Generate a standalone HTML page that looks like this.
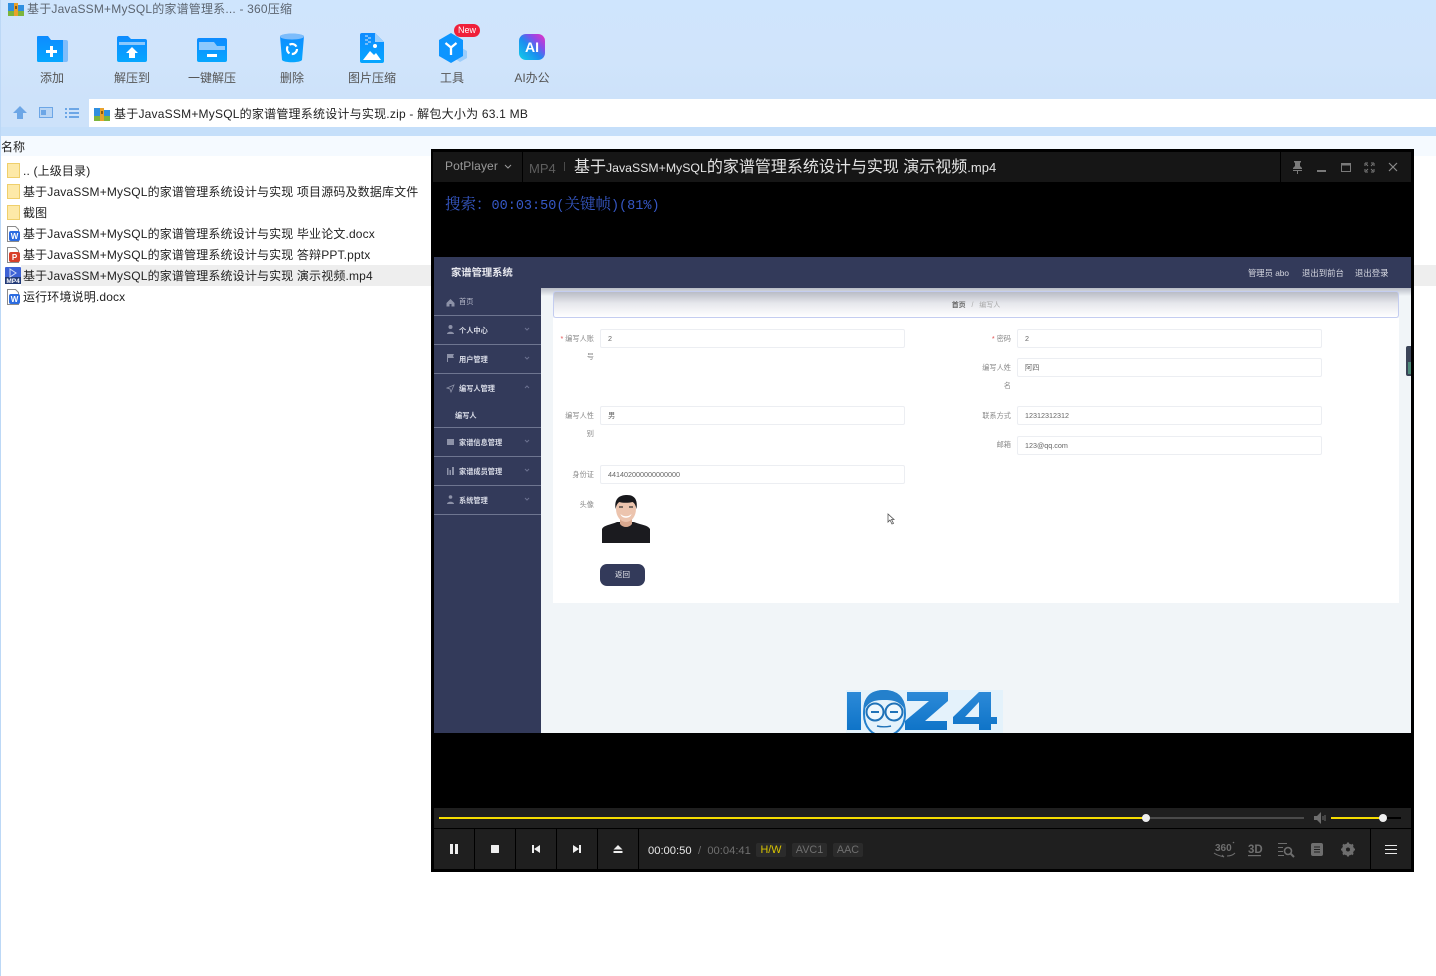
<!DOCTYPE html>
<html lang="zh"><head><meta charset="utf-8"><title>360压缩</title>
<style>
*{box-sizing:border-box}
html,body{margin:0;padding:0;width:1436px;height:976px;overflow:hidden;background:#fff}
body{position:relative;font-family:"Liberation Sans","Noto Sans CJK SC",sans-serif;color:#222}
.a{position:absolute;white-space:nowrap}
.tb{position:absolute;top:70px;width:80px;text-align:center;font-size:12px;color:#555;line-height:16px}
.f{position:absolute;left:23px;font-size:12px;line-height:16px;letter-spacing:.15px;color:#222;white-space:nowrap}
.ico{position:absolute}
.side{position:absolute;left:459px;font-size:7.2px;color:#d8dbe6;font-weight:bold;line-height:10px;white-space:nowrap}
.ln{position:absolute;left:434px;width:107px;height:1px;background:#6e7590}
.chev{position:absolute;left:524px;width:6px;height:6px}
.inp{position:absolute;height:19px;width:305px;background:#fff;border:1px solid #eceef2;border-radius:2px;font-size:7.2px;color:#666;line-height:17px;padding-left:7px}
.lb{position:absolute;font-size:7.2px;color:#8a8a8a;line-height:9px;text-align:right;white-space:nowrap}
.bsep{position:absolute;top:829px;width:1px;height:40px;background:#000}
.tag{position:absolute;top:843px;height:14px;border-radius:2px;background:#2b2b2b;font-size:10.8px;line-height:15px;text-align:center;color:#6f6f6f}
.m{font-family:"Liberation Mono",monospace;font-size:13.5px}
</style></head><body>

<!-- chrome background -->
<div class="a" style="left:0;top:0;width:1436px;height:99px;background:linear-gradient(#cfe5fd,#d0e4fb 60%,#cde2fa)"></div>
<div class="a" style="left:0;top:99px;width:89px;height:28px;background:#cde2fa"></div>
<div class="a" style="left:89px;top:99px;width:1347px;height:28px;background:#fff"></div>
<div class="a" style="left:0;top:127px;width:1436px;height:9px;background:#c5dffa"></div>
<div class="a" style="left:0;top:136px;width:1436px;height:20px;background:#f5faff"></div>
<div class="a" style="left:0;top:0;width:1px;height:976px;background:#bcd8f6"></div>

<!-- title -->
<svg class="ico" style="left:8px;top:1px" width="16" height="16" viewBox="0 0 16 16"><path d="M0 2h6l2 2h8v11H0z" fill="#2f8fe0"/><rect y="10" width="16" height="5" fill="#7cb53c"/><rect x="6" y="2" width="4" height="13" fill="#e9a22c"/><rect x="7" y="5" width="2" height="3" fill="#8a5a12"/></svg>
<div class="a" style="left:27px;top:1px;font-size:12px;line-height:16px;color:#5c6570;letter-spacing:.19px">基于JavaSSM+MySQL的家谱管理系... - 360压缩</div>

<!-- toolbar icons -->
<svg class="ico" style="left:36px;top:35px" width="33" height="28" viewBox="0 0 33 28"><defs><linearGradient id="g" x1="0" y1="0" x2="0" y2="1"><stop offset="0" stop-color="#0e8bff"/><stop offset="1" stop-color="#06a6ff"/></linearGradient></defs><path d="M27 5h3a2 2 0 0 1 2 2v18a2 2 0 0 1-2 2h-3z" fill="#7fbdfb"/><path d="M2 1h10l3 4h12v22H2a2 2 0 0 1-1-1V2a1 1 0 0 1 1-1z" fill="url(#g)"/><path d="M14 11h3v4h4v3h-4v4h-3v-4h-4v-3h4z" fill="#fff"/></svg>
<svg class="ico" style="left:117px;top:35px" width="30" height="28" viewBox="0 0 30 28"><path d="M2 1h9l3 3h14a2 2 0 0 1 2 2v19a2 2 0 0 1-2 2H2a2 2 0 0 1-2-2V3a2 2 0 0 1 2-2z" fill="url(#g)"/><rect x="2" y="7" width="26" height="3" fill="#8cc8fd"/><path d="M15 12l6 6h-3v5h-6v-5H9z" fill="#fff"/></svg>
<svg class="ico" style="left:197px;top:38px" width="30" height="25" viewBox="0 0 30 25"><rect width="30" height="24" rx="2" fill="url(#g)"/><path d="M2 4h15l3 4h8v4H2z" fill="#8cc8fd"/><rect x="10" y="16" width="10" height="3" fill="#fff"/></svg>
<svg class="ico" style="left:280px;top:33px" width="24" height="30" viewBox="0 0 24 30"><path d="M0 3c4-3 20-3 24 0l-2 24c-2 3-18 3-20 0z" fill="url(#g)"/><ellipse cx="12" cy="3.5" rx="12" ry="3" fill="#7cbcfb"/><circle cx="12" cy="16" r="5" fill="none" stroke="#fff" stroke-width="2.200" stroke-dasharray="8 2.400"/></svg>
<svg class="ico" style="left:360px;top:33px" width="24" height="30" viewBox="0 0 24 30"><path d="M2 0h13l9 9v19a2 2 0 0 1-2 2H2a2 2 0 0 1-2-2V2a2 2 0 0 1 2-2z" fill="url(#g)"/><path d="M15 0l9 9h-9z" fill="#9ccffd"/><path d="M3 27l7-9 4 4 2-2 5 7z" fill="#fff"/><circle cx="15" cy="13" r="2" fill="#fff"/><path d="M5 2h3v2H5zm3 2h3v2H8zM5 6h3v2H5zm3 2h3v2H8zM5 10h3v2H5z" fill="#75bcfb"/></svg>
<svg class="ico" style="left:438px;top:33px" width="30" height="30" viewBox="0 0 30 30"><path d="M22 14l7 4v7l-7 4-6-4v-7z" fill="#9ccdfb"/><path d="M13 0l12 7v16l-12 7-12-7V7z" fill="#0d95ff"/><path d="M7.500 10l5.500 4.500L18.500 10M13 14.500V22" fill="none" stroke="#fff" stroke-width="2.300"/></svg>
<div class="a" style="left:454px;top:24px;width:26px;height:13px;background:#f0203a;border-radius:7px;color:#fff;font-size:9px;line-height:13px;text-align:center">New</div>
<div class="a" style="left:519px;top:34px;width:26px;height:26px;border-radius:7px;background:linear-gradient(45deg,#11c9e8 5%,#1c8cf0 45%,#8a4bea 70%,#ee2fc0);color:#fff;font-weight:bold;font-size:14px;line-height:26px;text-align:center">AI</div>

<div class="tb" style="left:12px">添加</div>
<div class="tb" style="left:92px">解压到</div>
<div class="tb" style="left:172px">一键解压</div>
<div class="tb" style="left:252px">删除</div>
<div class="tb" style="left:332px">图片压缩</div>
<div class="tb" style="left:412px">工具</div>
<div class="tb" style="left:492px">AI办公</div>

<!-- nav -->
<svg class="ico" style="left:12px;top:105px" width="68" height="16" viewBox="0 0 68 16"><path d="M8 1l7 7h-4v6H5V8H1z" fill="#6ca6e6"/><rect x="27.500" y="2.500" width="13" height="10" fill="#b9d5f4" stroke="#6ca6e6"/><rect x="29" y="5" width="5" height="5" fill="#6ca6e6"/><path d="M53 3h2v2h-2zm4 0h10v2H57zM53 7h2v2h-2zm4 0h10v2H57zM53 11h2v2h-2zm4 0h10v2H57z" fill="#6ca6e6"/></svg>
<svg class="ico" style="left:94px;top:106px" width="16" height="16" viewBox="0 0 16 16"><path d="M0 2h6l2 2h8v11H0z" fill="#2f8fe0"/><rect y="10" width="16" height="5" fill="#7cb53c"/><rect x="6" y="2" width="4" height="13" fill="#e9a22c"/><rect x="7" y="5" width="2" height="3" fill="#8a5a12"/></svg>
<div class="a" style="left:114px;top:106px;font-size:12px;line-height:16px;letter-spacing:.22px;color:#222">基于JavaSSM+MySQL的家谱管理系统设计与实现.zip - 解包大小为 63.1 MB</div>

<!-- list -->
<div class="a" style="left:1px;top:140px;font-size:12px;line-height:15px;color:#222">名称</div>
<div class="a" style="left:21px;top:265px;width:1415px;height:21px;background:#eeeeee"></div>

<div class="ico" style="left:7px;top:163px;width:13px;height:15px;background:#fde9a8;border:1px solid #efcf6b"></div>
<div class="ico" style="left:7px;top:184px;width:13px;height:15px;background:#fde9a8;border:1px solid #efcf6b"></div>
<div class="ico" style="left:7px;top:205px;width:13px;height:15px;background:#fde9a8;border:1px solid #efcf6b"></div>
<svg class="ico" style="left:6px;top:226px" width="15" height="16" viewBox="0 0 15 16"><path d="M1.500.5h8l3 3v12h-11z" fill="#fff" stroke="#8b8b8b"/><rect x="3" y="5" width="11" height="10" rx="2" fill="#2c6ce0"/><text x="8.500" y="13" font-size="8" font-weight="bold" fill="#fff" text-anchor="middle" font-family="Liberation Sans">W</text></svg>
<svg class="ico" style="left:6px;top:247px" width="15" height="16" viewBox="0 0 15 16"><path d="M1.500.5h8l3 3v12h-11z" fill="#fff" stroke="#8b8b8b"/><rect x="3" y="5" width="11" height="10" rx="2" fill="#d8402a"/><text x="8.500" y="13" font-size="8" font-weight="bold" fill="#fff" text-anchor="middle" font-family="Liberation Sans">P</text></svg>
<svg class="ico" style="left:5px;top:267px" width="16" height="17" viewBox="0 0 16 17"><rect width="16" height="17" rx="1" fill="#3d62d6"/><rect y="10" width="16" height="7" fill="#223a77"/><path d="M5 2l6 4-6 4z" fill="none" stroke="#cfd9f7"/><text x="8" y="16" font-size="6.500" font-weight="bold" fill="#fff" text-anchor="middle" font-family="Liberation Sans">MP4</text></svg>
<svg class="ico" style="left:6px;top:289px" width="15" height="16" viewBox="0 0 15 16"><path d="M1.500.5h8l3 3v12h-11z" fill="#fff" stroke="#8b8b8b"/><rect x="3" y="5" width="11" height="10" rx="2" fill="#2c6ce0"/><text x="8.500" y="13" font-size="8" font-weight="bold" fill="#fff" text-anchor="middle" font-family="Liberation Sans">W</text></svg>

<div class="f" style="top:163px">.. (上级目录)</div>
<div class="f" style="top:184px">基于JavaSSM+MySQL的家谱管理系统设计与实现 项目源码及数据库文件</div>
<div class="f" style="top:205px">截图</div>
<div class="f" style="top:226px">基于JavaSSM+MySQL的家谱管理系统设计与实现 毕业论文.docx</div>
<div class="f" style="top:247px">基于JavaSSM+MySQL的家谱管理系统设计与实现 答辩PPT.pptx</div>
<div class="f" style="top:268px">基于JavaSSM+MySQL的家谱管理系统设计与实现 演示视频.mp4</div>
<div class="f" style="top:289px">运行环境说明.docx</div>

<!-- player -->
<div class="a" style="left:431px;top:149px;width:983px;height:723px;background:#000"></div>
<div class="a" style="left:433px;top:152px;width:978px;height:30px;background:#161616"></div>
<div class="a" style="left:522px;top:152px;width:1px;height:30px;background:#000"></div>
<div class="a" style="left:1280px;top:152px;width:1px;height:30px;background:#000"></div>
<div class="a" style="left:445px;top:158px;font-size:12px;line-height:16px;letter-spacing:.1px;color:#9a9a9a">PotPlayer</div>
<svg class="ico" style="left:504px;top:164px" width="8" height="6"><path d="M1 1l3 3 3-3" fill="none" stroke="#9a9a9a"/></svg>
<div class="a" style="left:529px;top:161px;font-size:13px;line-height:16px;color:#5e5e5e">MP4</div>
<div class="a" style="left:564px;top:162px;width:1px;height:9px;background:#4a4a4a"></div>
<div class="a" style="left:574px;top:158px;font-size:16px;line-height:20px;color:#e4e4e4">基于<span style="font-size:12.300px">JavaSSM+MySQL</span>的家谱管理系统设计与实现 演示视频<span style="font-size:13px">.mp4</span></div>
<svg class="ico" style="left:1290px;top:160px" width="112" height="15" viewBox="0 0 112 15" fill="#7a7a7a"><path d="M4 1h7v1.500H10V6l2 2v1H3V8l2-2V2.500H4zM3 10h9v1H8v3H7v-3H3z"/><rect x="27" y="10" width="9" height="2"/><path d="M51.500 3.500h9v8h-9zM51 4.500h10" fill="none" stroke="#7a7a7a" stroke-width="1"/><rect x="51" y="3" width="10" height="2.500"/><path d="M75 3h3M75 3v3M84 3h-3M84 3v3M75 12h3M75 12V9M84 12h-3M84 12V9M76 4l2 2M83 4l-2 2M76 11l2-2M83 11l-2-2" fill="none" stroke="#7a7a7a"/><path d="M99 3l8 8M107 3l-8 8" fill="none" stroke="#8a8a8a" stroke-width="1.200"/></svg>

<div class="a" style="left:445px;top:193px;font-family:'Noto Serif CJK SC',serif;font-size:15.500px;line-height:20px;color:#3658c6">搜索：<span class="m">00:03:50(</span>关键帧<span class="m">)(81%)</span></div>

<!-- video -->
<div class="a" style="left:434px;top:257px;width:977px;height:476px;background:#f1f5f8"></div>
<div class="a" style="left:434px;top:257px;width:977px;height:31px;background:#333a5a"></div>
<div class="a" style="left:434px;top:288px;width:107px;height:445px;background:#333a5a"></div>
<div class="a" style="left:541px;top:288px;width:870px;height:8px;background:linear-gradient(#b9bcc6,#f1f5f8)"></div>
<div class="a" style="left:451px;top:267px;font-size:10.300px;font-weight:bold;line-height:13px;color:#e8e9ef">家谱管理系统</div>
<div class="a" style="left:1248px;top:268px;font-size:8.300px;line-height:10px;color:#d5d7e0">管理员 abo</div>
<div class="a" style="left:1302px;top:268px;font-size:8.400px;line-height:10px;color:#d5d7e0">退出到前台</div>
<div class="a" style="left:1355px;top:268px;font-size:8.400px;line-height:10px;color:#d5d7e0">退出登录</div>

<svg class="ico" style="left:446px;top:298px" width="9" height="210" viewBox="0 0 9 210" fill="#8d92a8"><path d="M4.500 1L8.500 5v3.500h-3V6h-2v2.500h-3V5z"/><circle cx="4.500" cy="29" r="2"/><path d="M1 36c0-3 7-3 7 0z"/><path d="M1 56h1v8H1zM2 56h6l-1 2 1 2H2z"/><path d="M1 90l7-3-3 7-1-3z" fill="none" stroke="#8d92a8" stroke-width=".8"/><rect x="1" y="141" width="7" height="6"/><path d="M1 170h1.500v7H1zM3.500 172H5v5H3.500zM6 169h2v8H6z"/><circle cx="4.500" cy="199" r="1.800"/><path d="M1 206c0-3 7-3 7 0z"/></svg>
<div class="side" style="top:297px;font-weight:normal;color:#b7bacb">首页</div>
<div class="side" style="top:326px">个人中心</div>
<div class="side" style="top:355px">用户管理</div>
<div class="side" style="top:384px">编写人管理</div>
<div class="side" style="left:455px;top:411px">编写人</div>
<div class="side" style="top:438px">家谱信息管理</div>
<div class="side" style="top:467px">家谱成员管理</div>
<div class="side" style="top:496px">系统管理</div>
<div class="ln" style="top:315px"></div><div class="ln" style="top:344px"></div><div class="ln" style="top:373px"></div><div class="ln" style="top:427px"></div><div class="ln" style="top:456px"></div><div class="ln" style="top:485px"></div><div class="ln" style="top:514px"></div>
<svg class="chev" style="top:326px"><path d="M1 2l2 2 2-2" fill="none" stroke="#6b7190"/></svg>
<svg class="chev" style="top:355px"><path d="M1 2l2 2 2-2" fill="none" stroke="#6b7190"/></svg>
<svg class="chev" style="top:384px"><path d="M1 4l2-2 2 2" fill="none" stroke="#6b7190"/></svg>
<svg class="chev" style="top:438px"><path d="M1 2l2 2 2-2" fill="none" stroke="#6b7190"/></svg>
<svg class="chev" style="top:467px"><path d="M1 2l2 2 2-2" fill="none" stroke="#6b7190"/></svg>
<svg class="chev" style="top:496px"><path d="M1 2l2 2 2-2" fill="none" stroke="#6b7190"/></svg>

<div class="a" style="left:553px;top:318px;width:846px;height:285px;background:#fff"></div>
<div class="a" style="left:553px;top:291px;width:846px;height:27px;border:1px solid #c4cdf0;border-radius:3px;background:linear-gradient(#b9bcc6,#e6e7ec 45%,#fff);text-align:center;font-size:7px;line-height:28px;color:#aaa"><b style="color:#666">首页</b> &nbsp;&nbsp;/&nbsp;&nbsp; 编写人</div>

<div class="lb" style="left:555px;top:334px;width:39px"><span style="color:#e05050">*</span> 编写人账</div>
<div class="lb" style="left:555px;top:352px;width:39px">号</div>
<div class="lb" style="left:555px;top:411px;width:39px">编写人性</div>
<div class="lb" style="left:555px;top:429px;width:39px">别</div>
<div class="lb" style="left:555px;top:470px;width:39px">身份证</div>
<div class="lb" style="left:555px;top:500px;width:39px">头像</div>
<div class="inp" style="left:600px;top:329px">2</div>
<div class="inp" style="left:600px;top:406px">男</div>
<div class="inp" style="left:600px;top:465px">441402000000000000</div>

<div class="lb" style="left:971px;top:334px;width:40px"><span style="color:#e05050">*</span> 密码</div>
<div class="lb" style="left:971px;top:363px;width:40px">编写人姓</div>
<div class="lb" style="left:971px;top:381px;width:40px">名</div>
<div class="lb" style="left:971px;top:411px;width:40px">联系方式</div>
<div class="lb" style="left:971px;top:440px;width:40px">邮箱</div>
<div class="inp" style="left:1017px;top:329px">2</div>
<div class="inp" style="left:1017px;top:358px">阿四</div>
<div class="inp" style="left:1017px;top:406px">12312312312</div>
<div class="inp" style="left:1017px;top:436px">123@qq.com</div>

<svg class="ico" style="left:601px;top:494px" width="50" height="52" viewBox="0 0 50 52"><path d="M1 49V35c2-4 8-4 15-7h17c7 3 14 3 16 7v14z" fill="#1b1b1f"/><path d="M19 22h12v8c-3 4-9 4-12 0z" fill="#d9a88f"/><ellipse cx="25" cy="15" rx="10" ry="13" fill="#ecc4ae"/><path d="M14.500 15C13 4 19 1 26 1s11 4 9.500 14c-1-4-2-6-4-7-4 1-10 1-13 0-2 1-3 3-4 7z" fill="#18181c"/><path d="M19.500 20c3 3 8 3 11 0-1 5-10 5-11 0z" fill="#fff"/><path d="M18 13h4M28 13h4" stroke="#333" stroke-width="1.200"/></svg>
<div class="a" style="left:600px;top:564px;width:45px;height:22px;background:#333a5a;border-radius:7px;color:#e8e9ef;font-size:7.500px;line-height:22px;text-align:center">返回</div>
<svg class="ico" style="left:887px;top:513px" width="9" height="12" viewBox="0 0 9 12"><path d="M1 1v8l2-2 2 4 1.500-.7-2-3.800H7z" fill="#fff" stroke="#555" stroke-width=".8"/></svg>

<!-- logo -->
<div class="a" style="left:846px;top:690px;width:157px;height:43px;background:#e4f2fb"></div>
<svg class="ico" style="left:846px;top:690px" width="157" height="43" viewBox="0 0 157 43"><defs><linearGradient id="b" x1="0" y1="0" x2="0" y2="1"><stop offset="0" stop-color="#2c8ad8"/><stop offset="1" stop-color="#0f74c8"/></linearGradient></defs><rect x="1" y="2" width="14" height="38" fill="url(#b)"/><path d="M61 2h41v9L79 31h22v9H59v-9l24-20H61z" fill="url(#b)"/><path d="M133 2h12v25h6v7h-6v6h-12v-6h-26v-7zM133 12l-14 15h14z" fill="url(#b)" fill-rule="evenodd"/><path d="M18 24C18 8 24 1 38 1s21 7 21 23c0 13-9 22-21 22S18 37 18 24z" fill="#e4f2fb" stroke="#2480cc" stroke-width="2"/><path d="M18 20C16 8 26 0 38 0s22 8 21 20c-5-8-10-10-21-10s-15 2-20 10z" fill="#2480cc"/><circle cx="29" cy="22" r="8.500" fill="#eef7fd" stroke="#1f72b8" stroke-width="2"/><circle cx="48" cy="22" r="8.500" fill="#eef7fd" stroke="#1f72b8" stroke-width="2"/><path d="M25 22h8M44 22h8" stroke="#1f72b8" stroke-width="2"/><path d="M31 36c4 1 10 1 14 0" fill="none" stroke="#1f72b8" stroke-width="1.500"/></svg>
<div class="a" style="left:1406px;top:346px;width:5px;height:30px;background:#3b4458;border-radius:2px 0 0 2px"></div>
<div class="a" style="left:1408px;top:362px;width:3px;height:12px;background:#4e8a7a"></div>

<!-- controls -->
<div class="a" style="left:434px;top:808px;width:977px;height:20px;background:#1f1f1f"></div>
<div class="a" style="left:434px;top:829px;width:977px;height:40px;background:#1f1f1f"></div>
<div class="a" style="left:1146px;top:817px;width:158px;height:2px;background:#4a4a4a"></div>
<div class="a" style="left:439px;top:817px;width:707px;height:2px;background:#f5dc00"></div>
<div class="a" style="left:1142px;top:814px;width:8px;height:8px;border-radius:50%;background:#eee"></div>
<div class="a" style="left:1383px;top:817px;width:18px;height:2px;background:#000"></div>
<div class="a" style="left:1331px;top:817px;width:52px;height:2px;background:#f5dc00"></div>
<div class="a" style="left:1379px;top:814px;width:8px;height:8px;border-radius:50%;background:#eee"></div>
<svg class="ico" style="left:1313px;top:811px" width="14" height="14" viewBox="0 0 14 14"><path d="M1 5h3l4-4v12L4 9H1z" fill="#6e6e6e"/><path d="M10 5v4M12 4v6" stroke="#6e6e6e"/></svg>

<div class="bsep" style="left:474px"></div><div class="bsep" style="left:515px"></div><div class="bsep" style="left:556px"></div><div class="bsep" style="left:597px"></div><div class="bsep" style="left:638px"></div><div class="bsep" style="left:1370px"></div>
<svg class="ico" style="left:448px;top:843px" width="180" height="14" viewBox="0 0 180 14" fill="#eee"><rect x="2" y="1" width="3" height="10"/><rect x="7" y="1" width="3" height="10"/><rect x="43" y="2" width="8" height="8" rx=".5"/><path d="M84 2h2v8h-2zM92 2v8l-6-4zM125 2v8l6-4zM131 2h2v8h-2zM170 2l4.500 4.500h-9z"/><rect x="165.500" y="8" width="9" height="2"/></svg>
<div class="a" style="left:648px;top:844px;font-size:11.200px;line-height:14px;color:#e8e8e8">00:00:50</div>
<div class="a" style="left:698px;top:844px;font-size:11.200px;line-height:14px;color:#6f6f6f">/ &nbsp;00:04:41</div>
<div class="tag" style="left:756px;width:30px;color:#d8c400">H/W</div>
<div class="tag" style="left:792px;width:35px">AVC1</div>
<div class="tag" style="left:833px;width:30px">AAC</div>

<svg class="ico" style="left:1213px;top:840px" width="150" height="20" viewBox="0 0 150 20" fill="#6e6e6e"><text x="2" y="11" font-size="10" font-family="Liberation Sans" font-weight="bold">360</text><circle cx="20.500" cy="2.500" r=".8"/><path d="M1 13c4 3 8 3 10 4l-2-2M22 13c-2 2-5 3-8 3" fill="none" stroke="#6e6e6e"/><text x="35" y="13" font-size="11.500" font-family="Liberation Sans" font-weight="bold">3D</text><rect x="35" y="15" width="13" height="1.200"/><path d="M65 3h9v1h-9zM65 7h5v1h-5zM65 11h5v1h-5zM65 15h6v1h-6z"/><circle cx="75" cy="11" r="3.500" fill="none" stroke="#6e6e6e" stroke-width="1.600"/><path d="M77.500 13.500l3.500 3.500" stroke="#6e6e6e" stroke-width="2"/><rect x="98" y="3" width="12" height="13" rx="2"/><path d="M101 7h6M101 9.500h6M101 12h6" stroke="#1f1f1f"/><circle cx="135" cy="9.500" r="4.500" fill="none" stroke="#6e6e6e" stroke-width="3"/><path d="M135 2.500v14M128 9.500h14M130 4.500l10 10M140 4.500l-10 10" stroke="#6e6e6e" stroke-width="2"/><circle cx="135" cy="9.500" r="2" fill="#1f1f1f"/></svg>
<svg class="ico" style="left:1385px;top:844px" width="12" height="11" fill="#e8e8e8"><rect y="1" width="12" height="1"/><rect y="5" width="12" height="1"/><rect y="9" width="12" height="1"/></svg>

</body></html>
